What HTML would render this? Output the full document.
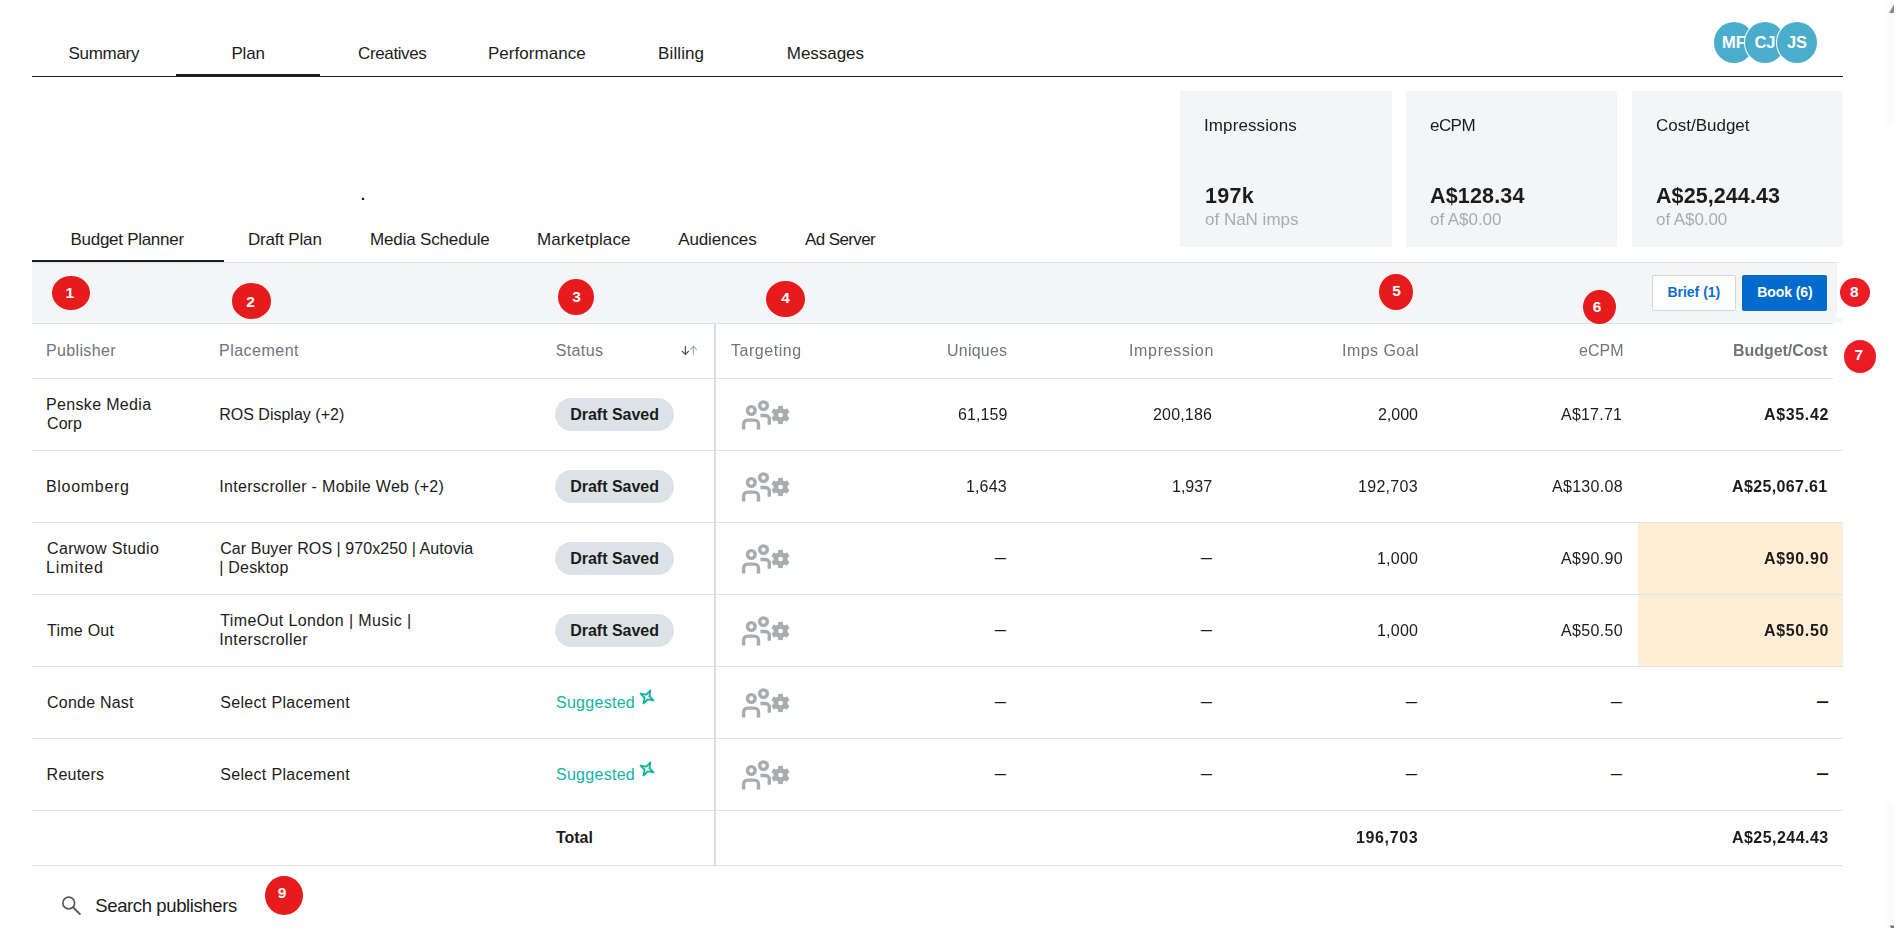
<!DOCTYPE html>
<html lang="en">
<head>
<meta charset="utf-8">
<title>Budget Planner</title>
<style>
*{box-sizing:border-box;margin:0;padding:0}
html,body{width:1897px;height:928px;overflow:hidden;background:#fff}
body{font-family:"Liberation Sans",sans-serif;font-size:16px;color:#1c1c1c;position:relative}
.abs{position:absolute;white-space:nowrap}
.tx{position:absolute;white-space:nowrap;line-height:20px}
.box{position:absolute}
.g{will-change:transform}
/* avatars */
.av{position:absolute;top:22.2px;width:40.4px;height:40.6px;border-radius:50%;background:#4aadcc;color:#fff;font-weight:bold;font-size:16.5px;line-height:40px;text-align:center;overflow:hidden;box-shadow:0 0 0 1px #fff}
.card{position:absolute;top:91px;height:155.6px;background:#f4f5f7}
.btn{position:absolute;top:275px;height:36px;border-radius:2px}
.btn.brief{left:1652px;width:83.5px;background:#fff;border:1px solid #d3d7dc}
.btn.book{left:1742px;width:85px;background:#006bcd}
.dot{position:absolute;border-radius:50%;color:#fff;font-weight:bold;font-size:15.5px;text-align:center}
.hline{position:absolute;left:32px;width:1811px;height:1px;background:#dbe3ea}
.vline{position:absolute;left:714px;top:324px;width:2px;height:542px;background:#d8dfe7}
.r{position:absolute;white-space:nowrap;text-align:right;line-height:20px;font-size:16px;color:#1c1c1c}
.r.dash span{display:inline-block;transform:scaleX(1.26);transform-origin:100% 50%}
.r.dash.b span{transform:scaleX(1.42)}
.b{font-weight:bold}
.pill{position:absolute;left:555px;width:119px;height:33px;border-radius:17px;background:#dce3e7}
.hl{position:absolute;left:1638px;width:205px;background:#ffedd6}
</style>
</head>
<body>

<!-- top tab bar -->
<div class="box" style="left:32px;top:76px;width:1811px;height:1px;background:#1c1c1c"></div>
<div class="box" style="left:176px;top:74px;width:144px;height:3px;background:#1c1c1c"></div>

<div class="av" style="left:1713.8px">MF</div>
<div class="av" style="left:1744.8px">CJ</div>
<div class="av" style="left:1776.8px">JS</div>

<div class="card" style="left:1180px;width:212px"></div>
<div class="card" style="left:1406px;width:211px"></div>
<div class="card" style="left:1632px;width:211px"></div>

<div class="abs" style="left:361px;top:185px;font-size:14px;line-height:20px;color:#000;font-weight:bold">.</div>

<!-- sub tab bar -->
<div class="box" style="left:32px;top:262px;width:1811px;height:1px;background:#dde3ea"></div>
<div class="box" style="left:32px;top:260px;width:192px;height:2.4px;background:#1c1c1c"></div>

<!-- toolbar -->
<div class="box" style="left:32px;top:263px;width:1810px;height:60px;background:#f4f5f7"></div>
<div class="btn brief"></div>
<div class="btn book"></div>

<!-- table lines -->
<div class="hl" style="top:523px;height:143px"></div>
<div class="hline" style="top:323px"></div>
<div class="hline" style="top:378px"></div>
<div class="hline" style="top:450px"></div>
<div class="hline" style="top:522px"></div>
<div class="hline" style="top:594px"></div>
<div class="hline" style="top:666px"></div>
<div class="hline" style="top:738px"></div>
<div class="hline" style="top:810px"></div>
<div class="hline" style="top:865px"></div>
<div class="vline"></div>
<!-- annotation white patches -->
<div class="box" style="left:1837px;top:262px;width:60px;height:56px;background:#fff"></div>
<div class="box" style="left:1833px;top:323px;width:64px;height:70px;background:#fff"></div>
<!-- scrollbar hint -->
<div class="box" style="left:1886px;top:0;width:8px;height:124px;background:#fbfbfb"></div>
<div class="box" style="left:1886px;top:804px;width:8px;height:124px;background:#fbfbfb"></div>
<svg class="abs" style="left:1886px;top:923px" width="8" height="5" viewBox="0 0 8 5"><path d="M3.5 2.5H8V5H5z" fill="#777"/></svg>
<svg class="abs" style="left:1886px;top:3px" width="8" height="12" viewBox="0 0 8 12"><path d="M8 1.5V10H3z" fill="#8a8a8a"/></svg>

<!--GEN-->
<div class="status-pills">
<div class="pill" style="top:398px"></div>
<div class="pill" style="top:470px"></div>
<div class="pill" style="top:542px"></div>
<div class="pill" style="top:614px"></div>
</div>
<nav class="main-tabs">
<div class="tx" style="left:68.50px;top:44.00px;font-size:17px;color:#1c1c1c;letter-spacing:-0.305px">Summary</div>
<div class="tx" style="left:231.40px;top:44.00px;font-size:17px;color:#1c1c1c;letter-spacing:-0.190px">Plan</div>
<div class="tx" style="left:358.10px;top:44.00px;font-size:17px;color:#1c1c1c;letter-spacing:-0.388px">Creatives</div>
<div class="tx" style="left:488.00px;top:44.00px;font-size:17px;color:#1c1c1c;letter-spacing:0.034px">Performance</div>
<div class="tx" style="left:658.10px;top:44.00px;font-size:17px;color:#1c1c1c;letter-spacing:0.100px">Billing</div>
<div class="tx" style="left:786.80px;top:44.00px;font-size:17px;color:#1c1c1c;letter-spacing:-0.040px">Messages</div>
</nav>
<nav class="sub-tabs">
<div class="tx" style="left:70.50px;top:230.00px;font-size:17px;color:#1c1c1c;letter-spacing:-0.280px">Budget Planner</div>
<div class="tx" style="left:247.90px;top:230.00px;font-size:17px;color:#1c1c1c;letter-spacing:-0.181px">Draft Plan</div>
<div class="tx" style="left:370.10px;top:230.00px;font-size:17px;color:#1c1c1c;letter-spacing:-0.174px">Media Schedule</div>
<div class="tx" style="left:537.00px;top:230.00px;font-size:17px;color:#1c1c1c;letter-spacing:0.086px">Marketplace</div>
<div class="tx" style="left:678.20px;top:230.00px;font-size:17px;color:#1c1c1c;letter-spacing:-0.111px">Audiences</div>
<div class="tx" style="left:805.00px;top:230.00px;font-size:17px;color:#1c1c1c;letter-spacing:-0.603px">Ad Server</div>
</nav>
<section class="stat-cards">
<div class="tx g" style="left:1204.00px;top:116.00px;font-size:17px;color:#1c1c1c;letter-spacing:0.106px">Impressions</div>
<div class="tx g" style="left:1204.50px;top:186.00px;font-size:21.5px;color:#1c1c1c;letter-spacing:0.276px;font-weight:bold">197k</div>
<div class="tx g" style="left:1205.00px;top:210.00px;font-size:17px;color:#a9abae;letter-spacing:-0.002px">of NaN imps</div>
<div class="tx g" style="left:1430.40px;top:116.00px;font-size:17px;color:#1c1c1c;letter-spacing:-0.557px">eCPM</div>
<div class="tx g" style="left:1430.40px;top:186.00px;font-size:21.5px;color:#1c1c1c;letter-spacing:0.159px;font-weight:bold">A$128.34</div>
<div class="tx g" style="left:1430.40px;top:210.00px;font-size:17px;color:#a9abae;letter-spacing:-0.053px">of A$0.00</div>
<div class="tx g" style="left:1656.30px;top:116.00px;font-size:17px;color:#1c1c1c;letter-spacing:-0.003px">Cost/Budget</div>
<div class="tx g" style="left:1656.30px;top:186.00px;font-size:21.5px;color:#1c1c1c;letter-spacing:0.083px;font-weight:bold">A$25,244.43</div>
<div class="tx g" style="left:1656.30px;top:210.00px;font-size:17px;color:#a9abae;letter-spacing:-0.066px">of A$0.00</div>
</section>
<div class="table-head">
<div class="tx" style="left:46.00px;top:341.00px;font-size:16px;color:#70757c;letter-spacing:0.353px">Publisher</div>
<div class="tx" style="left:219.00px;top:341.00px;font-size:16px;color:#70757c;letter-spacing:0.494px">Placement</div>
<div class="tx" style="left:555.70px;top:341.00px;font-size:16px;color:#70757c;letter-spacing:0.388px">Status</div>
<div class="tx g" style="left:731.10px;top:341.00px;font-size:16px;color:#70757c;letter-spacing:0.547px">Targeting</div>
<div class="tx g" style="left:946.80px;top:341.00px;font-size:16px;color:#70757c;letter-spacing:0.216px">Uniques</div>
<div class="tx g" style="left:1129.00px;top:341.00px;font-size:16px;color:#70757c;letter-spacing:0.672px">Impression</div>
<div class="tx g" style="left:1341.80px;top:341.00px;font-size:16px;color:#70757c;letter-spacing:0.455px">Imps Goal</div>
<div class="tx g" style="left:1578.70px;top:341.00px;font-size:16px;color:#70757c;letter-spacing:0.025px">eCPM</div>
<div class="tx g" style="left:1733.10px;top:341.00px;font-size:16px;color:#70757c;letter-spacing:-0.057px;font-weight:bold">Budget/Cost</div>
</div>
<div class="table-row r1">
<div class="tx" style="left:46.00px;top:395.00px;font-size:16px;color:#1c1c1c;letter-spacing:0.337px">Penske Media</div>
<div class="tx" style="left:47.00px;top:414.00px;font-size:16px;color:#1c1c1c;letter-spacing:0.073px">Corp</div>
<div class="tx" style="left:219.20px;top:405.00px;font-size:16px;color:#1c1c1c;letter-spacing:0.007px">ROS Display (+2)</div>
<div class="tx" style="left:570.20px;top:405.00px;font-size:16px;color:#1c1c1c;letter-spacing:-0.015px;font-weight:bold">Draft Saved</div>
<div class="tx g" style="left:957.70px;top:405.00px;font-size:16px;color:#1c1c1c;letter-spacing:0.072px">61,159</div>
<div class="tx g" style="left:1153.40px;top:405.00px;font-size:16px;color:#1c1c1c;letter-spacing:0.177px">200,186</div>
<div class="tx g" style="left:1377.80px;top:405.00px;font-size:16px;color:#1c1c1c;letter-spacing:-0.035px">2,000</div>
<div class="tx g" style="left:1561.20px;top:405.00px;font-size:16px;color:#1c1c1c;letter-spacing:0.215px">A$17.71</div>
<div class="tx g" style="left:1764.00px;top:405.00px;font-size:16px;color:#1c1c1c;letter-spacing:0.651px;font-weight:bold">A$35.42</div>
</div>
<div class="table-row r2">
<div class="tx" style="left:46.00px;top:477.00px;font-size:16px;color:#1c1c1c;letter-spacing:0.690px">Bloomberg</div>
<div class="tx" style="left:219.20px;top:477.00px;font-size:16px;color:#1c1c1c;letter-spacing:0.313px">Interscroller - Mobile Web (+2)</div>
<div class="tx" style="left:570.20px;top:477.00px;font-size:16px;color:#1c1c1c;letter-spacing:-0.015px;font-weight:bold">Draft Saved</div>
<div class="tx g" style="left:966.40px;top:477.00px;font-size:16px;color:#1c1c1c;letter-spacing:0.140px">1,643</div>
<div class="tx g" style="left:1172.20px;top:477.00px;font-size:16px;color:#1c1c1c;letter-spacing:0.015px">1,937</div>
<div class="tx g" style="left:1358.10px;top:477.00px;font-size:16px;color:#1c1c1c;letter-spacing:0.294px">192,703</div>
<div class="tx g" style="left:1552.20px;top:477.00px;font-size:16px;color:#1c1c1c;letter-spacing:0.299px">A$130.08</div>
<div class="tx g" style="left:1731.80px;top:477.00px;font-size:16px;color:#1c1c1c;letter-spacing:0.347px;font-weight:bold">A$25,067.61</div>
</div>
<div class="table-row r3">
<div class="tx" style="left:47.00px;top:539.00px;font-size:16px;color:#1c1c1c;letter-spacing:0.358px">Carwow Studio</div>
<div class="tx" style="left:46.00px;top:558.00px;font-size:16px;color:#1c1c1c;letter-spacing:0.887px">Limited</div>
<div class="tx" style="left:220.20px;top:539.00px;font-size:16px;color:#1c1c1c;letter-spacing:0.060px">Car Buyer ROS | 970x250 | Autovia</div>
<div class="tx" style="left:219.20px;top:558.00px;font-size:16px;color:#1c1c1c;letter-spacing:0.225px">| Desktop</div>
<div class="tx" style="left:570.20px;top:549.00px;font-size:16px;color:#1c1c1c;letter-spacing:-0.015px;font-weight:bold">Draft Saved</div>
<div class="tx g" style="left:1376.80px;top:549.00px;font-size:16px;color:#1c1c1c;letter-spacing:0.215px">1,000</div>
<div class="tx g" style="left:1561.10px;top:549.00px;font-size:16px;color:#1c1c1c;letter-spacing:0.348px">A$90.90</div>
<div class="tx g" style="left:1764.00px;top:549.00px;font-size:16px;color:#1c1c1c;letter-spacing:0.651px;font-weight:bold">A$90.90</div>
</div>
<div class="table-row r4">
<div class="tx" style="left:47.00px;top:621.00px;font-size:16px;color:#1c1c1c;letter-spacing:0.250px">Time Out</div>
<div class="tx" style="left:220.20px;top:611.00px;font-size:16px;color:#1c1c1c;letter-spacing:0.384px">TimeOut London | Music |</div>
<div class="tx" style="left:219.20px;top:630.00px;font-size:16px;color:#1c1c1c;letter-spacing:0.396px">Interscroller</div>
<div class="tx" style="left:570.20px;top:621.00px;font-size:16px;color:#1c1c1c;letter-spacing:-0.015px;font-weight:bold">Draft Saved</div>
<div class="tx g" style="left:1376.80px;top:621.00px;font-size:16px;color:#1c1c1c;letter-spacing:0.215px">1,000</div>
<div class="tx g" style="left:1561.10px;top:621.00px;font-size:16px;color:#1c1c1c;letter-spacing:0.348px">A$50.50</div>
<div class="tx g" style="left:1764.00px;top:621.00px;font-size:16px;color:#1c1c1c;letter-spacing:0.651px;font-weight:bold">A$50.50</div>
</div>
<div class="table-row r5">
<div class="tx" style="left:47.00px;top:693.00px;font-size:16px;color:#1c1c1c;letter-spacing:0.228px">Conde Nast</div>
<div class="tx" style="left:220.20px;top:693.00px;font-size:16px;color:#1c1c1c;letter-spacing:0.329px">Select Placement</div>
<div class="tx" style="left:556.00px;top:693.00px;font-size:16px;color:#11b5a4;letter-spacing:0.274px">Suggested</div>
</div>
<div class="table-row r6">
<div class="tx" style="left:46.60px;top:765.00px;font-size:16px;color:#1c1c1c;letter-spacing:0.229px">Reuters</div>
<div class="tx" style="left:220.20px;top:765.00px;font-size:16px;color:#1c1c1c;letter-spacing:0.329px">Select Placement</div>
<div class="tx" style="left:556.00px;top:765.00px;font-size:16px;color:#11b5a4;letter-spacing:0.274px">Suggested</div>
</div>
<div class="table-total">
<div class="tx" style="left:555.90px;top:828.00px;font-size:16px;color:#1c1c1c;letter-spacing:0.004px;font-weight:bold">Total</div>
<div class="tx g" style="left:1356.30px;top:828.00px;font-size:16px;color:#1c1c1c;letter-spacing:0.627px;font-weight:bold">196,703</div>
<div class="tx g" style="left:1732.20px;top:828.00px;font-size:16px;color:#1c1c1c;letter-spacing:0.457px;font-weight:bold">A$25,244.43</div>
</div>
<div class="search">
<div class="tx" style="left:95.30px;top:896.00px;font-size:18.5px;color:#1c1c1c;letter-spacing:-0.389px">Search publishers</div>
</div>
<div class="actions">
<div class="tx" style="left:1667.40px;top:282.00px;font-size:14px;color:#0a6ed1;letter-spacing:-0.004px;font-weight:bold">Brief (1)</div>
<div class="tx" style="left:1757.20px;top:282.00px;font-size:14px;color:#ffffff;letter-spacing:-0.077px;font-weight:bold">Book (6)</div>
</div>
<div class="overlays">
<svg class="abs" style="left:741px;top:400px" width="50" height="32" viewBox="0 0 50 32"><g fill="none" stroke="#a7acb1" stroke-width="3.4"><circle cx="10.3" cy="10.5" r="3.85"/><circle cx="22.5" cy="5.7" r="3.85"/><path d="M2.6 29.4v-5.2a4.1 4.1 0 0 1 4.1-4.1h6.7a4.1 4.1 0 0 1 4.1 4.1v5.2"/><path d="M19.4 15.5h5.2a3.7 3.7 0 0 1 3.7 3.7v5.5"/></g><g transform="translate(39.5 15)"><circle r="4.7" fill="none" stroke="#a7acb1" stroke-width="4.8"/><g fill="#a7acb1"><rect x="-2.4" y="-9.1" width="4.8" height="3"/><rect x="-2.4" y="6" width="4.8" height="3.1"/><rect x="-2.4" y="-9.1" width="4.8" height="3" transform="rotate(60)"/><rect x="-2.4" y="6" width="4.8" height="3.1" transform="rotate(60)"/><rect x="-2.4" y="-9.1" width="4.8" height="3" transform="rotate(120)"/><rect x="-2.4" y="6" width="4.8" height="3.1" transform="rotate(120)"/></g></g></svg>
<svg class="abs" style="left:741px;top:472px" width="50" height="32" viewBox="0 0 50 32"><g fill="none" stroke="#a7acb1" stroke-width="3.4"><circle cx="10.3" cy="10.5" r="3.85"/><circle cx="22.5" cy="5.7" r="3.85"/><path d="M2.6 29.4v-5.2a4.1 4.1 0 0 1 4.1-4.1h6.7a4.1 4.1 0 0 1 4.1 4.1v5.2"/><path d="M19.4 15.5h5.2a3.7 3.7 0 0 1 3.7 3.7v5.5"/></g><g transform="translate(39.5 15)"><circle r="4.7" fill="none" stroke="#a7acb1" stroke-width="4.8"/><g fill="#a7acb1"><rect x="-2.4" y="-9.1" width="4.8" height="3"/><rect x="-2.4" y="6" width="4.8" height="3.1"/><rect x="-2.4" y="-9.1" width="4.8" height="3" transform="rotate(60)"/><rect x="-2.4" y="6" width="4.8" height="3.1" transform="rotate(60)"/><rect x="-2.4" y="-9.1" width="4.8" height="3" transform="rotate(120)"/><rect x="-2.4" y="6" width="4.8" height="3.1" transform="rotate(120)"/></g></g></svg>
<svg class="abs" style="left:741px;top:544px" width="50" height="32" viewBox="0 0 50 32"><g fill="none" stroke="#a7acb1" stroke-width="3.4"><circle cx="10.3" cy="10.5" r="3.85"/><circle cx="22.5" cy="5.7" r="3.85"/><path d="M2.6 29.4v-5.2a4.1 4.1 0 0 1 4.1-4.1h6.7a4.1 4.1 0 0 1 4.1 4.1v5.2"/><path d="M19.4 15.5h5.2a3.7 3.7 0 0 1 3.7 3.7v5.5"/></g><g transform="translate(39.5 15)"><circle r="4.7" fill="none" stroke="#a7acb1" stroke-width="4.8"/><g fill="#a7acb1"><rect x="-2.4" y="-9.1" width="4.8" height="3"/><rect x="-2.4" y="6" width="4.8" height="3.1"/><rect x="-2.4" y="-9.1" width="4.8" height="3" transform="rotate(60)"/><rect x="-2.4" y="6" width="4.8" height="3.1" transform="rotate(60)"/><rect x="-2.4" y="-9.1" width="4.8" height="3" transform="rotate(120)"/><rect x="-2.4" y="6" width="4.8" height="3.1" transform="rotate(120)"/></g></g></svg>
<div class="r dash" style="left:986.4px;width:20px;top:548px"><span>–</span></div>
<div class="r dash" style="left:1191.7px;width:20px;top:548px"><span>–</span></div>
<svg class="abs" style="left:741px;top:616px" width="50" height="32" viewBox="0 0 50 32"><g fill="none" stroke="#a7acb1" stroke-width="3.4"><circle cx="10.3" cy="10.5" r="3.85"/><circle cx="22.5" cy="5.7" r="3.85"/><path d="M2.6 29.4v-5.2a4.1 4.1 0 0 1 4.1-4.1h6.7a4.1 4.1 0 0 1 4.1 4.1v5.2"/><path d="M19.4 15.5h5.2a3.7 3.7 0 0 1 3.7 3.7v5.5"/></g><g transform="translate(39.5 15)"><circle r="4.7" fill="none" stroke="#a7acb1" stroke-width="4.8"/><g fill="#a7acb1"><rect x="-2.4" y="-9.1" width="4.8" height="3"/><rect x="-2.4" y="6" width="4.8" height="3.1"/><rect x="-2.4" y="-9.1" width="4.8" height="3" transform="rotate(60)"/><rect x="-2.4" y="6" width="4.8" height="3.1" transform="rotate(60)"/><rect x="-2.4" y="-9.1" width="4.8" height="3" transform="rotate(120)"/><rect x="-2.4" y="6" width="4.8" height="3.1" transform="rotate(120)"/></g></g></svg>
<div class="r dash" style="left:986.4px;width:20px;top:620px"><span>–</span></div>
<div class="r dash" style="left:1191.7px;width:20px;top:620px"><span>–</span></div>
<svg class="abs" style="left:638px;top:688px" width="18" height="18" viewBox="0 0 18 18"><path d="M12.43 2.55 L11.39 8.27 L15.45 12.43 L9.73 11.39 L5.57 15.45 L6.61 9.73 L2.55 5.57 L8.27 6.61Z" fill="none" stroke="#11b5a4" stroke-width="1.9" stroke-linejoin="round"/></svg>
<svg class="abs" style="left:741px;top:688px" width="50" height="32" viewBox="0 0 50 32"><g fill="none" stroke="#a7acb1" stroke-width="3.4"><circle cx="10.3" cy="10.5" r="3.85"/><circle cx="22.5" cy="5.7" r="3.85"/><path d="M2.6 29.4v-5.2a4.1 4.1 0 0 1 4.1-4.1h6.7a4.1 4.1 0 0 1 4.1 4.1v5.2"/><path d="M19.4 15.5h5.2a3.7 3.7 0 0 1 3.7 3.7v5.5"/></g><g transform="translate(39.5 15)"><circle r="4.7" fill="none" stroke="#a7acb1" stroke-width="4.8"/><g fill="#a7acb1"><rect x="-2.4" y="-9.1" width="4.8" height="3"/><rect x="-2.4" y="6" width="4.8" height="3.1"/><rect x="-2.4" y="-9.1" width="4.8" height="3" transform="rotate(60)"/><rect x="-2.4" y="6" width="4.8" height="3.1" transform="rotate(60)"/><rect x="-2.4" y="-9.1" width="4.8" height="3" transform="rotate(120)"/><rect x="-2.4" y="6" width="4.8" height="3.1" transform="rotate(120)"/></g></g></svg>
<div class="r dash" style="left:986.4px;width:20px;top:692px"><span>–</span></div>
<div class="r dash" style="left:1191.7px;width:20px;top:692px"><span>–</span></div>
<div class="r dash" style="left:1397.1px;width:20px;top:692px"><span>–</span></div>
<div class="r dash" style="left:1602.2px;width:20px;top:692px"><span>–</span></div>
<div class="r dash b" style="left:1809.4px;width:20px;top:692px"><span>–</span></div>
<svg class="abs" style="left:638px;top:760px" width="18" height="18" viewBox="0 0 18 18"><path d="M12.43 2.55 L11.39 8.27 L15.45 12.43 L9.73 11.39 L5.57 15.45 L6.61 9.73 L2.55 5.57 L8.27 6.61Z" fill="none" stroke="#11b5a4" stroke-width="1.9" stroke-linejoin="round"/></svg>
<svg class="abs" style="left:741px;top:760px" width="50" height="32" viewBox="0 0 50 32"><g fill="none" stroke="#a7acb1" stroke-width="3.4"><circle cx="10.3" cy="10.5" r="3.85"/><circle cx="22.5" cy="5.7" r="3.85"/><path d="M2.6 29.4v-5.2a4.1 4.1 0 0 1 4.1-4.1h6.7a4.1 4.1 0 0 1 4.1 4.1v5.2"/><path d="M19.4 15.5h5.2a3.7 3.7 0 0 1 3.7 3.7v5.5"/></g><g transform="translate(39.5 15)"><circle r="4.7" fill="none" stroke="#a7acb1" stroke-width="4.8"/><g fill="#a7acb1"><rect x="-2.4" y="-9.1" width="4.8" height="3"/><rect x="-2.4" y="6" width="4.8" height="3.1"/><rect x="-2.4" y="-9.1" width="4.8" height="3" transform="rotate(60)"/><rect x="-2.4" y="6" width="4.8" height="3.1" transform="rotate(60)"/><rect x="-2.4" y="-9.1" width="4.8" height="3" transform="rotate(120)"/><rect x="-2.4" y="6" width="4.8" height="3.1" transform="rotate(120)"/></g></g></svg>
<div class="r dash" style="left:986.4px;width:20px;top:764px"><span>–</span></div>
<div class="r dash" style="left:1191.7px;width:20px;top:764px"><span>–</span></div>
<div class="r dash" style="left:1397.1px;width:20px;top:764px"><span>–</span></div>
<div class="r dash" style="left:1602.2px;width:20px;top:764px"><span>–</span></div>
<div class="r dash b" style="left:1809.4px;width:20px;top:764px"><span>–</span></div>
<svg class="abs" style="left:680px;top:343px" width="20" height="14" viewBox="0 0 20 14"><g fill="none" stroke-width="1.15"><path d="M5.4 3v8.4M1.8 7.9l3.6 3.6 3.5-3.6" stroke="#4a4f56"/><path d="M13.4 11.8V3.5M10.1 6.8l3.3-3.4 3.4 3.4" stroke="#a3a9b0"/></g></svg>
<svg class="abs" style="left:60px;top:894px" width="24" height="24" viewBox="0 0 24 24"><circle cx="8.7" cy="9" r="5.9" fill="none" stroke="#565b61" stroke-width="1.75"/><path d="M13 13.3l7.4 7.3" stroke="#565b61" stroke-width="1.9" fill="none"/></svg>
<div class="dot" style="left:52.0px;top:275.6px;width:37.6px;height:34.2px;line-height:34.2px;background:#e51b1c"><span style="position:relative;left:-0.9px;top:0.4px">1</span></div>
<div class="dot" style="left:231.7px;top:282.9px;width:39.6px;height:35.7px;line-height:35.7px;background:#e51b1c"><span style="position:relative;left:-0.9px;top:1.5px">2</span></div>
<div class="dot" style="left:558.0px;top:279.1px;width:36.2px;height:36.1px;line-height:36.1px;background:#e51b1c"><span style="position:relative;left:0.4px;top:0px">3</span></div>
<div class="dot" style="left:765.5px;top:281.4px;width:39.5px;height:36px;line-height:36px;background:#e51b1c"><span style="position:relative;left:0.3px;top:-1.6px">4</span></div>
<div class="dot" style="left:1378.7px;top:274.0px;width:34.5px;height:36px;line-height:36px;background:#e51b1c"><span style="position:relative;left:0.6px;top:-0.7px">5</span></div>
<div class="dot" style="left:1583.1px;top:290.0px;width:32.9px;height:34.2px;line-height:34.2px;background:#e51b1c"><span style="position:relative;left:-2.6px;top:0px">6</span></div>
<div class="dot" style="left:1840.0px;top:278.0px;width:29.9px;height:28.8px;line-height:28.8px;background:#ec1c24"><span style="position:relative;left:-0.6px;top:-0.3px">8</span></div>
<div class="dot" style="left:1844.0px;top:340.1px;width:32.2px;height:32.9px;line-height:32.9px;background:#ec1c24"><span style="position:relative;left:-1.4px;top:-0.9px">7</span></div>
<div class="dot" style="left:265.1px;top:875.9px;width:38px;height:39.2px;line-height:39.2px;background:#e51b1c"><span style="position:relative;left:-2px;top:-3.1px">9</span></div>
</div>
<!--/GEN-->
</body>
</html>
